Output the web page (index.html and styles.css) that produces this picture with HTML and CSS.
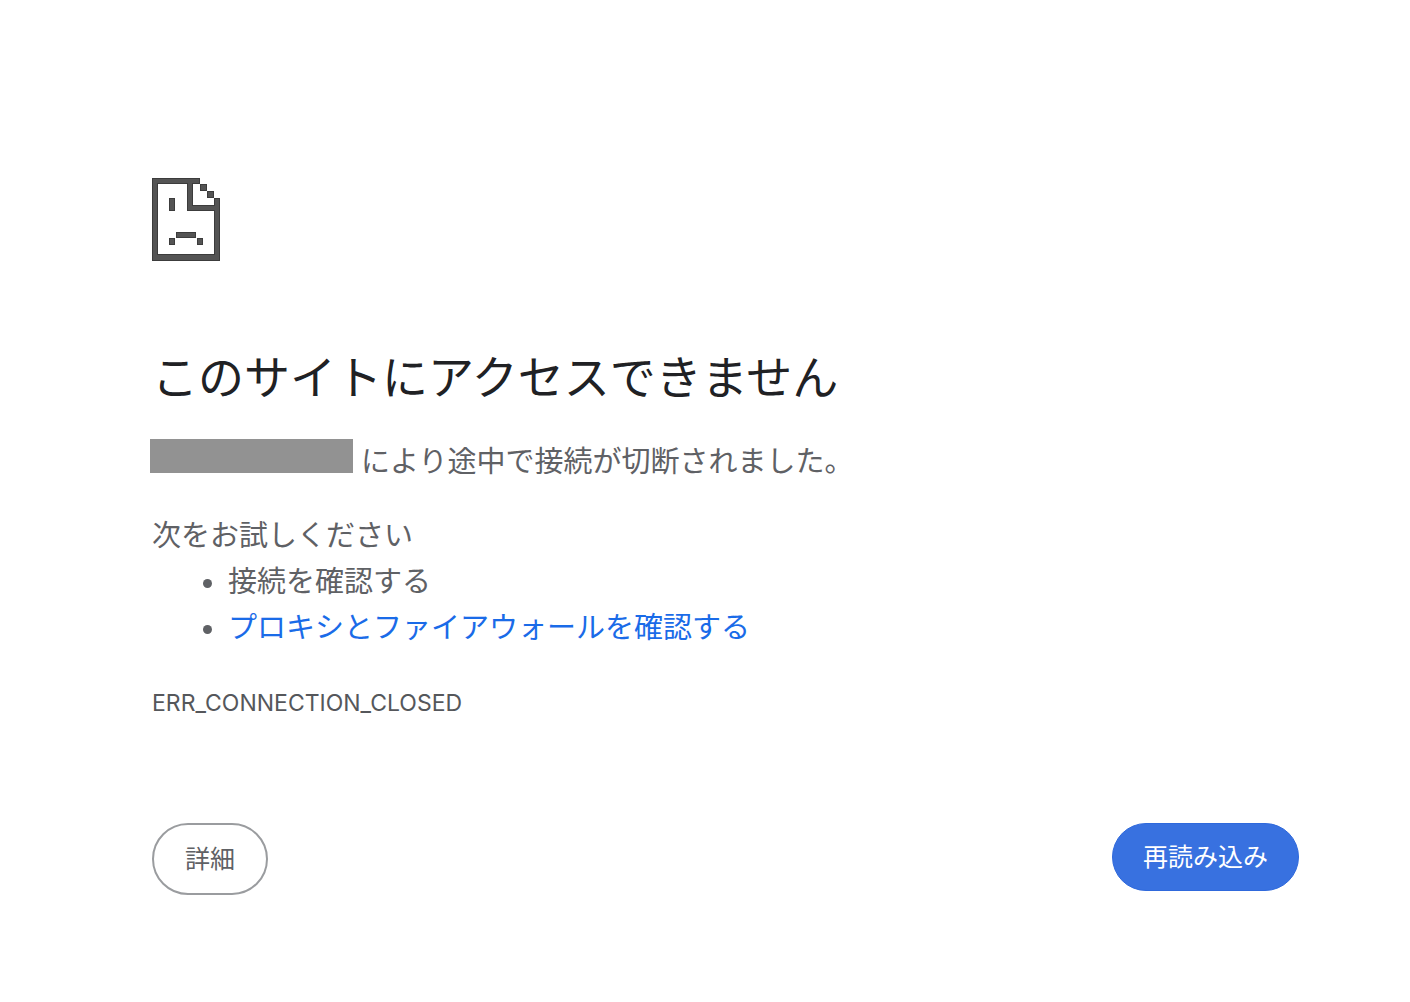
FILE: index.html
```html
<!DOCTYPE html>
<html lang="ja">
<head>
<meta charset="utf-8">
<meta name="viewport" content="width=device-width, initial-scale=1">
<title>このサイトにアクセスできません</title>
<link rel="stylesheet" href="styles.css">
</head>
<body>
<main class="error-page">
  <svg class="error-icon" viewBox="0 0 68 83" aria-hidden="true" shape-rendering="crispEdges">
    <path fill="#3c3c3c" fill-rule="evenodd" d="M0 0H48V6H41V27H62V20H68V83H0ZM6 6V76H62V33H35V6ZM48 6H55V13H48ZM55 13H62V20H55ZM17 20H23V33H17ZM24 54H44V60H24ZM17 60H23V67H17ZM45 60H51V67H45Z"/>
    <path fill="#545454" d="M1 1H47V5H1ZM1 5H5V77H63V21H67V82H1ZM36 5H40V28H63V32H36ZM49 7H54V12H49ZM56 14H61V19H56ZM18 21H22V32H18ZM25 55H43V59H25ZM18 61H22V66H18ZM46 61H50V66H46Z"/>
  </svg>
  <h1 class="title">このサイトにアクセスできません</h1>
  <p class="summary"><span class="redacted"></span>により途中で接続が切断されました。</p>
  <section class="suggestions">
    <p class="suggestions-title">次をお試しください</p>
    <ul class="suggestion-list">
      <li>接続を確認する</li>
      <li><a class="link" href="#">プロキシとファイアウォールを確認する</a></li>
    </ul>
  </section>
  <p class="error-code">ERR_CONNECTION_CLOSED</p>
  <div class="actions">
    <button class="button details" type="button">詳細</button>
    <button class="button reload" type="button">再読み込み</button>
  </div>
</main>
</body>
</html>
```
FILE: styles.css
```css
* {
  box-sizing: border-box;
}

body {
  margin: 0;
  background: #fff;
  color: #5f6165;
  font-family: Inter, "Noto Sans CJK JP", sans-serif;
  font-size: 29px;
  line-height: 46px;
}

.error-page {
  padding: 178px 111px 108px 152px;
}

.error-icon {
  display: block;
  width: 68px;
  height: 83px;
}

h1,
p,
ul {
  margin: 0;
}

.title {
  margin-top: 80px;
  color: #202124;
  font-size: 46px;
  font-weight: 400;
  line-height: 72px;
}

.summary {
  display: flex;
  align-items: flex-start;
  gap: 8px;
  margin-top: 26px;
}

.redacted {
  width: 203px;
  height: 34px;
  margin-left: -2px;
  background: #929292;
}

.suggestions {
  margin-top: 28px;
}

.suggestion-list {
  padding-left: 76px;
}

.link {
  color: #1a6be8;
  text-decoration: none;
}

.error-code {
  margin-top: 29px;
  color: #55575b;
  font-size: 23px;
}

.actions {
  display: flex;
  align-items: flex-start;
  justify-content: space-between;
  margin-top: 97px;
}

.button {
  border-radius: 36px;
  font: inherit;
  font-size: 25px;
  line-height: 36px;
}

.details {
  padding: 16px 31px;
  border: 2px solid #9a9c9f;
  background: #fff;
  color: #5f6165;
}

.reload {
  padding: 15px 30px;
  border: 1px solid #2f69dc;
  background: #3871e0;
  color: #fff;
}
```
